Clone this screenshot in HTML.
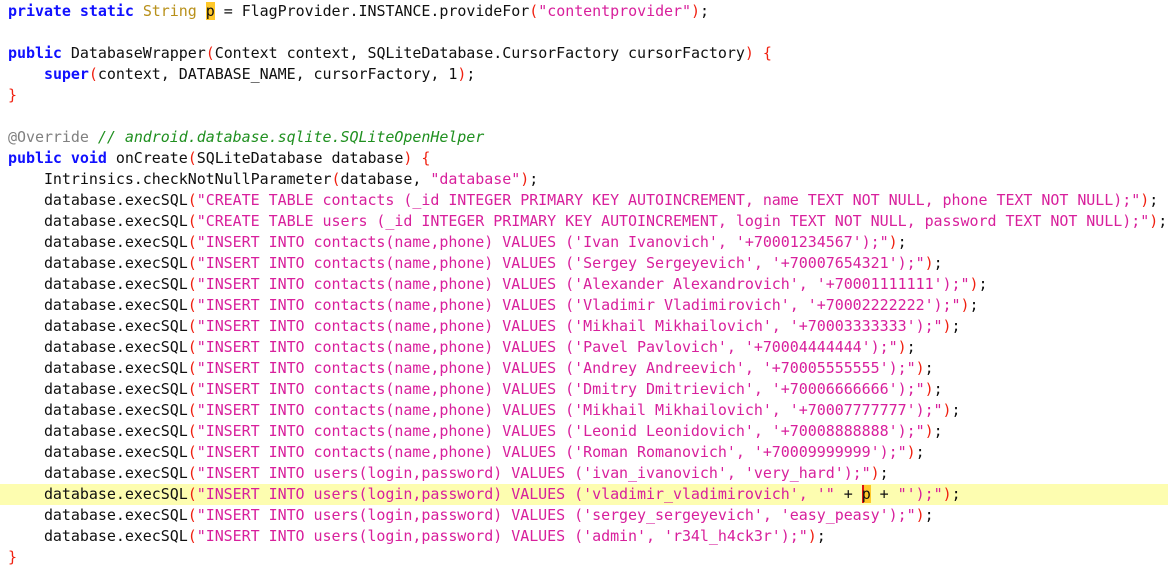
<!DOCTYPE html>
<html><head><meta charset="utf-8"><style>
html,body{margin:0;padding:0;background:#fff;width:1168px;height:574px;overflow:hidden}
pre{margin:0;padding:1px 0 0 8px;font-family:"DejaVu Sans Mono","Liberation Mono",monospace;font-size:15px;letter-spacing:-0.045px;line-height:21px;color:#101010;white-space:pre}
.k{color:#1010ff;font-weight:bold}
.t{color:#b8901a}
.s{color:#d8209c}
.p{color:#f02010}
.c{color:#209020;font-style:italic}
.a{color:#808080}
.h{background:#ffc82a}
.hl{display:block;background:#fdfdb0;margin-left:-8px;padding-left:8px}
.cur{box-shadow:inset 2px 0 0 #e01010}
</style></head><body><pre><span class="k">private static</span> <span class="t">String</span> <span class="h">p</span> = FlagProvider.INSTANCE.provideFor<span class="p">(</span><span class="s">"contentprovider"</span><span class="p">)</span>;

<span class="k">public</span> DatabaseWrapper<span class="p">(</span>Context context, SQLiteDatabase.CursorFactory cursorFactory<span class="p">)</span> <span class="p">{</span>
    <span class="k">super</span><span class="p">(</span>context, DATABASE_NAME, cursorFactory, 1<span class="p">)</span>;
<span class="p">}</span>

<span class="a">@Override</span> <span class="c">// android.database.sqlite.SQLiteOpenHelper</span>
<span class="k">public void</span> onCreate<span class="p">(</span>SQLiteDatabase database<span class="p">)</span> <span class="p">{</span>
    Intrinsics.checkNotNullParameter<span class="p">(</span>database, <span class="s">"database"</span><span class="p">)</span>;
    database.execSQL<span class="p">(</span><span class="s">"CREATE TABLE contacts (_id INTEGER PRIMARY KEY AUTOINCREMENT, name TEXT NOT NULL, phone TEXT NOT NULL);"</span><span class="p">)</span>;
    database.execSQL<span class="p">(</span><span class="s">"CREATE TABLE users (_id INTEGER PRIMARY KEY AUTOINCREMENT, login TEXT NOT NULL, password TEXT NOT NULL);"</span><span class="p">)</span>;
    database.execSQL<span class="p">(</span><span class="s">"INSERT INTO contacts(name,phone) VALUES ('Ivan Ivanovich', '+70001234567');"</span><span class="p">)</span>;
    database.execSQL<span class="p">(</span><span class="s">"INSERT INTO contacts(name,phone) VALUES ('Sergey Sergeyevich', '+70007654321');"</span><span class="p">)</span>;
    database.execSQL<span class="p">(</span><span class="s">"INSERT INTO contacts(name,phone) VALUES ('Alexander Alexandrovich', '+70001111111');"</span><span class="p">)</span>;
    database.execSQL<span class="p">(</span><span class="s">"INSERT INTO contacts(name,phone) VALUES ('Vladimir Vladimirovich', '+70002222222');"</span><span class="p">)</span>;
    database.execSQL<span class="p">(</span><span class="s">"INSERT INTO contacts(name,phone) VALUES ('Mikhail Mikhailovich', '+70003333333');"</span><span class="p">)</span>;
    database.execSQL<span class="p">(</span><span class="s">"INSERT INTO contacts(name,phone) VALUES ('Pavel Pavlovich', '+70004444444');"</span><span class="p">)</span>;
    database.execSQL<span class="p">(</span><span class="s">"INSERT INTO contacts(name,phone) VALUES ('Andrey Andreevich', '+70005555555');"</span><span class="p">)</span>;
    database.execSQL<span class="p">(</span><span class="s">"INSERT INTO contacts(name,phone) VALUES ('Dmitry Dmitrievich', '+70006666666');"</span><span class="p">)</span>;
    database.execSQL<span class="p">(</span><span class="s">"INSERT INTO contacts(name,phone) VALUES ('Mikhail Mikhailovich', '+70007777777');"</span><span class="p">)</span>;
    database.execSQL<span class="p">(</span><span class="s">"INSERT INTO contacts(name,phone) VALUES ('Leonid Leonidovich', '+70008888888');"</span><span class="p">)</span>;
    database.execSQL<span class="p">(</span><span class="s">"INSERT INTO contacts(name,phone) VALUES ('Roman Romanovich', '+70009999999');"</span><span class="p">)</span>;
    database.execSQL<span class="p">(</span><span class="s">"INSERT INTO users(login,password) VALUES ('ivan_ivanovich', 'very_hard');"</span><span class="p">)</span>;
<span class="hl">    database.execSQL<span class="p">(</span><span class="s">"INSERT INTO users(login,password) VALUES ('vladimir_vladimirovich', '"</span> + <span class="h cur">p</span> + <span class="s">"');"</span><span class="p">)</span>;</span>    database.execSQL<span class="p">(</span><span class="s">"INSERT INTO users(login,password) VALUES ('sergey_sergeyevich', 'easy_peasy');"</span><span class="p">)</span>;
    database.execSQL<span class="p">(</span><span class="s">"INSERT INTO users(login,password) VALUES ('admin', 'r34l_h4ck3r');"</span><span class="p">)</span>;
<span class="p">}</span></pre></body></html>
